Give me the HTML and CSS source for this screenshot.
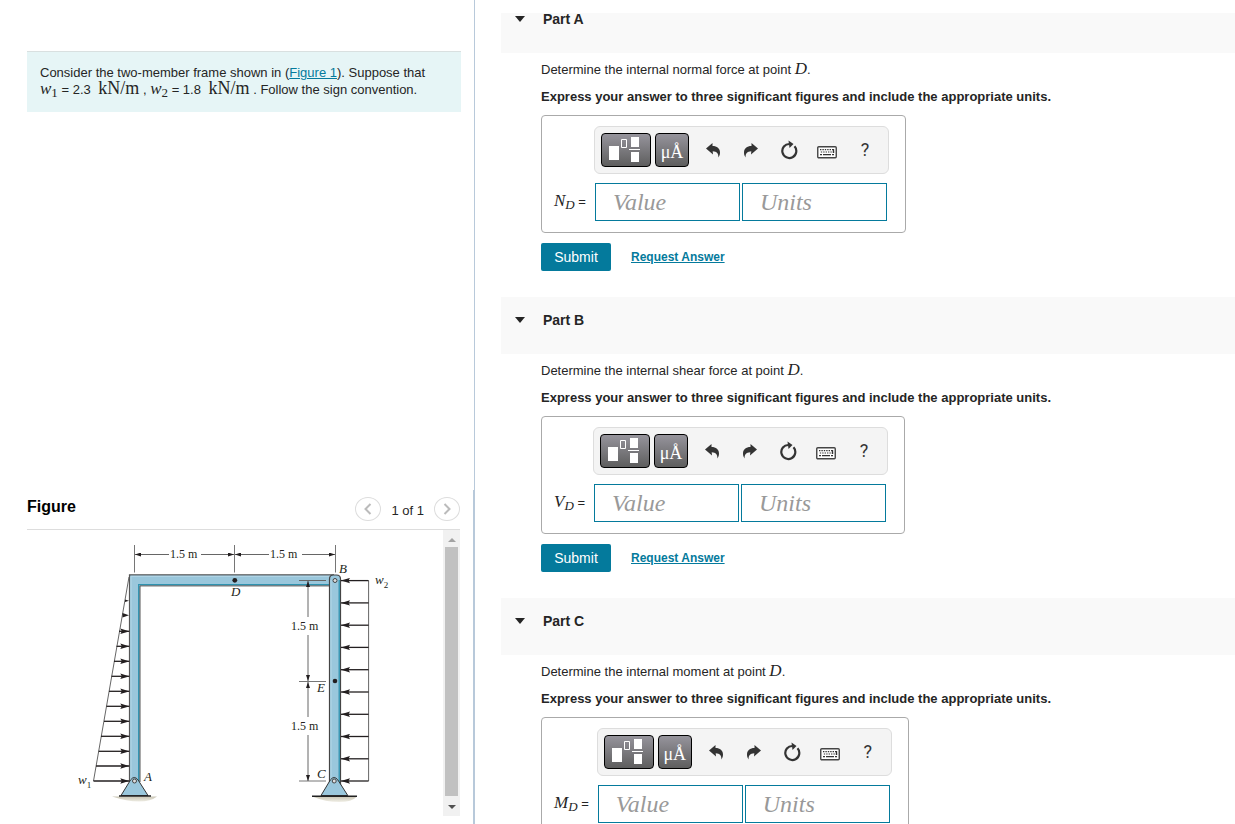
FILE: index.html
```
<!DOCTYPE html>
<html lang="en">
<head>
<meta charset="utf-8">
<title>Two-member frame</title>
<link rel="stylesheet" href="styles.css">
</head>
<body>
<svg class="defs" aria-hidden="true">
  <symbol id="i-template" viewBox="0 0 34 28">
    <path fill="#fff" d="M0 10h10v14H0zM22 1h8v10h-8zM22 16h8v10h-8zM20 13h11v1H20z"/>
    <path fill="none" stroke="#fff" d="M12.500 3.500h5v8h-5z"/>
  </symbol>
  <symbol id="i-undo" viewBox="0 0 16 16">
    <path fill="#333" d="M1 6.500 7.500 1v3C12 4 15 6.500 15 10.500c0 2-.6 3.500-1.600 5C13.500 11.500 12 9.500 7.700 9.300L8 12.500z"/>
  </symbol>
  <symbol id="i-redo" viewBox="0 0 16 16">
    <path fill="#333" d="M15 6.500 8.500 1v3C4 4 1 6.500 1 10.500c0 2 .6 3.500 1.600 5C2.500 11.500 4 9.500 8.300 9.300L8 12.500z"/>
  </symbol>
  <symbol id="i-reset" viewBox="0 0 18 20">
    <path fill="none" stroke="#333" stroke-width="2.200" d="M14.500 6.300A7 7 0 1 1 9.500 4"/>
    <path fill="#333" d="M8.500.5 13.500 4 9.500 8z"/>
  </symbol>
  <symbol id="i-keyboard" viewBox="0 0 20 13">
    <rect x=".75" y=".75" width="18.500" height="11" rx="1" fill="#fff" stroke="#444" stroke-width="1.400"/>
    <path stroke="#333" stroke-width="1.200" stroke-dasharray="1.400 1" d="M3 3.700h14M3.800 6h13.400"/>
    <path stroke="#333" stroke-width="1.300" d="M3 8.700h2m1 0h8m1 0h2M16.500 3v4"/>
  </symbol>
</svg>

<div class="page">
  <aside class="left">
    <section class="intro">
      Consider the two-member frame shown in (<a href="#figure">Figure 1</a>). Suppose that
      <span class="math"><i>w</i><sub>1</sub></span> = 2.3 <span class="math unit">kN/m</span> , <span class="math"><i>w</i><sub>2</sub></span> = 1.8 <span class="math unit">kN/m</span> . Follow the sign convention.
    </section>

    <section class="figure" id="figure">
      <header class="figure-head">
        <h2>Figure</h2>
        <nav class="pager" aria-label="Figures">
          <button type="button" aria-label="Previous"><svg width="8" height="12" viewBox="0 0 8 12"><path d="M6.500 1 1.500 6l5 5"/></svg></button>
          <span>1 of 1</span>
          <button type="button" aria-label="Next"><svg width="8" height="12" viewBox="0 0 8 12"><path d="m1.500 1 5 5-5 5"/></svg></button>
        </nav>
      </header>
      <div class="viewer">
        <svg class="diagram" width="416" height="286" viewBox="27 530 416 286" role="img" aria-label="Frame A B C with distributed loads">
          <defs>
            <marker id="load" viewBox="0 0 9 6" refX="9" refY="3" markerWidth="9" markerHeight="6" markerUnits="userSpaceOnUse" orient="auto"><path d="M0 .3 9 3 0 5.700 1.500 3z" fill="#231f20"/></marker>
            <marker id="dim" viewBox="0 0 6 4" refX="6" refY="2" markerWidth="6" markerHeight="4" markerUnits="userSpaceOnUse" orient="auto"><path d="M0 0 6 2 0 4z" fill="#231f20"/></marker>
            <linearGradient id="ground" x2="0" y2="1"><stop stop-color="#c9c5b4"/><stop offset="1" stop-color="#f2f0e8"/></linearGradient>
          </defs>
          <path d="M112 796.500h45q-6 5-18 5t-27-5zM312 796.500h45q-5 5.500-18 5.500t-27-5.500z" fill="url(#ground)"/>
          <path d="M129.500 782V574.800H334v11H140V782z" fill="#9ac7dc"/>
          <path d="M138.700 782V584.600H330" fill="none" stroke="#2e93b0" stroke-width="1.300"/>
          <path d="M129.500 782V574.800H334" fill="none" stroke="#555" stroke-width="1.200"/>
          <path d="M140 782V585.900H330" fill="none" stroke="#555"/>
          <path d="M131 782V576.300H330" fill="none" stroke="#b4d8e8"/>
          <path d="M329.500 785V579q0-4 4-4h3q4 0 4 4v206z" fill="#9ac7dc" stroke="#444" stroke-width="1.200"/>
          <path d="M339.200 785V580" stroke="#2e93b0" stroke-width="1.300"/>
          <path d="M331 785V580" stroke="#b4d8e8"/>
          <path d="M299 580.500h27" stroke="#666"/>
          <g fill="#9ac7dc" stroke="#333">
            <path d="M121 795.500 130.500 780q3.800-5 7.600 0l9.900 15.500z"/>
            <path d="M321 795.500 330.300 780q3.800-5 7.600 0l9.900 15.500z"/>
          </g>
          <path d="M119 796h32M312 796.300h45" stroke="#222" stroke-width="1.400"/>
          <g fill="#ddd" stroke="#444"><circle cx="134.500" cy="781" r="2"/><circle cx="334.200" cy="781" r="2"/><circle cx="335" cy="580.500" r="2"/></g>
          <g fill="#231f20"><circle cx="234.800" cy="580.300" r="2.400"/><circle cx="335" cy="681" r="2.300"/></g>
          <path d="M129 577 93.500 781M368.600 580.600V781" stroke="#555" stroke-width=".9"/>
          <g stroke="#231f20" stroke-width="1.300" marker-end="url(#load)">
            <path d="M119 631.300h10.300"/><path d="M116.500 646.300h12.800"/><path d="M114 661.300h15.300"/><path d="M111.500 676.300h17.800"/><path d="M109 691.300h20.300"/><path d="M106.500 706.300h22.800"/><path d="M104 721.300h25.300"/><path d="M101 736.300h28.300"/><path d="M98.700 751.300h30.600"/><path d="M96 766h33.300"/><path d="M93.500 781h35.800"/>
            <path d="M368.600 580.600H341"/><path d="M368.600 602.900H341"/><path d="M368.600 625.200H341"/><path d="M368.600 647.400H341"/><path d="M368.600 669.700H341"/><path d="M368.600 692H341"/><path d="M368.600 714.300H341"/><path d="M368.600 736.500H341"/><path d="M368.600 758.800H341"/><path d="M368.600 781H341"/>
          </g>
          <path d="m125 599.500 4 1.200-4 1.200zM122.500 613l6.500 2.300-6.500 2.300z" fill="#231f20"/>
          <path d="M134.500 545v27.500M234.500 545v27.500M335.500 545v27.500M299 681.500h27M299 781h27" stroke="#666" stroke-width=".9"/>
          <g stroke="#555" stroke-width=".9" marker-end="url(#dim)">
            <path d="M169 554.500h-34"/><path d="M201 554.500h33"/><path d="M269 554.500h-34"/><path d="M302 554.500h33"/>
            <path d="M308 617v-36"/><path d="M308 635v46"/><path d="M308 717v-35"/><path d="M308 735v46"/>
          </g>
          <g class="dim-text">
            <text x="170" y="558">1.5 m</text><text x="270" y="558">1.5 m</text><text x="291" y="630">1.5 m</text><text x="291" y="730">1.5 m</text>
          </g>
          <g class="point-text">
            <text x="231" y="596">D</text><text x="339" y="573">B</text><text x="317" y="692">E</text><text x="317" y="778">C</text><text x="144" y="781">A</text>
            <text x="78" y="784">w<tspan class="sub" dy="4">1</tspan></text><text x="375" y="584">w<tspan class="sub" dy="4">2</tspan></text>
          </g>
        </svg>
        <div class="scrollbar" aria-hidden="true"><span class="up"></span><span class="thumb"></span><span class="down"></span></div>
      </div>
    </section>
  </aside>

  <main class="right">
    <section class="part">
      <h2 class="part-head"><button type="button"><span class="caret"></span>Part A</button></h2>
      <div class="part-body">
        <p>Determine the internal normal force at point <i class="math">D</i>.</p>
        <p class="strong">Express your answer to three significant figures and include the appropriate units.</p>
        <div class="answer">
          <div class="toolbar">
            <button class="dark wide" type="button" aria-label="Templates"><svg width="34" height="28"><use href="#i-template"/></svg></button>
            <button class="dark" type="button">μÅ</button>
            <div class="tools">
              <button type="button" aria-label="Undo"><svg width="16" height="16"><use href="#i-undo"/></svg></button>
              <button type="button" aria-label="Redo"><svg width="16" height="16"><use href="#i-redo"/></svg></button>
              <button type="button" aria-label="Reset"><svg width="18" height="20"><use href="#i-reset"/></svg></button>
              <button class="keys" type="button" aria-label="Keyboard"><svg width="20" height="13"><use href="#i-keyboard"/></svg></button>
              <button class="help" type="button">?</button>
            </div>
          </div>
          <label for="va"><span class="math"><i>N</i><sub><i>D</i></sub></span> =</label>
          <div class="fields"><input id="va" type="text" placeholder="Value"><input type="text" placeholder="Units" aria-label="Units"></div>
        </div>
        <div class="actions"><button class="submit" type="button">Submit</button><a href="#a">Request Answer</a></div>
      </div>
    </section>

    <section class="part">
      <h2 class="part-head"><button type="button"><span class="caret"></span>Part B</button></h2>
      <div class="part-body">
        <p>Determine the internal shear force at point <i class="math">D</i>.</p>
        <p class="strong">Express your answer to three significant figures and include the appropriate units.</p>
        <div class="answer">
          <div class="toolbar">
            <button class="dark wide" type="button" aria-label="Templates"><svg width="34" height="28"><use href="#i-template"/></svg></button>
            <button class="dark" type="button">μÅ</button>
            <div class="tools">
              <button type="button" aria-label="Undo"><svg width="16" height="16"><use href="#i-undo"/></svg></button>
              <button type="button" aria-label="Redo"><svg width="16" height="16"><use href="#i-redo"/></svg></button>
              <button type="button" aria-label="Reset"><svg width="18" height="20"><use href="#i-reset"/></svg></button>
              <button class="keys" type="button" aria-label="Keyboard"><svg width="20" height="13"><use href="#i-keyboard"/></svg></button>
              <button class="help" type="button">?</button>
            </div>
          </div>
          <label for="vb"><span class="math"><i>V</i><sub><i>D</i></sub></span> =</label>
          <div class="fields"><input id="vb" type="text" placeholder="Value"><input type="text" placeholder="Units" aria-label="Units"></div>
        </div>
        <div class="actions"><button class="submit" type="button">Submit</button><a href="#b">Request Answer</a></div>
      </div>
    </section>

    <section class="part">
      <h2 class="part-head"><button type="button"><span class="caret"></span>Part C</button></h2>
      <div class="part-body">
        <p>Determine the internal moment at point <i class="math">D</i>.</p>
        <p class="strong">Express your answer to three significant figures and include the appropriate units.</p>
        <div class="answer">
          <div class="toolbar">
            <button class="dark wide" type="button" aria-label="Templates"><svg width="34" height="28"><use href="#i-template"/></svg></button>
            <button class="dark" type="button">μÅ</button>
            <div class="tools">
              <button type="button" aria-label="Undo"><svg width="16" height="16"><use href="#i-undo"/></svg></button>
              <button type="button" aria-label="Redo"><svg width="16" height="16"><use href="#i-redo"/></svg></button>
              <button type="button" aria-label="Reset"><svg width="18" height="20"><use href="#i-reset"/></svg></button>
              <button class="keys" type="button" aria-label="Keyboard"><svg width="20" height="13"><use href="#i-keyboard"/></svg></button>
              <button class="help" type="button">?</button>
            </div>
          </div>
          <label for="vc"><span class="math"><i>M</i><sub><i>D</i></sub></span> =</label>
          <div class="fields"><input id="vc" type="text" placeholder="Value"><input type="text" placeholder="Units" aria-label="Units"></div>
        </div>
      </div>
    </section>
  </main>
</div>
</body>
</html>
```

FILE: styles.css
```
* { box-sizing: border-box; }
body {
  margin: 0;
  background: #fff;
  color: #252525;
  font: 13px/18px "Liberation Sans", Arial, sans-serif;
}
.defs { display: none; }
button { margin: 0; padding: 0; border: 0; background: none; color: inherit; font: inherit; cursor: pointer; }
svg { display: block; }
a { color: #047a9c; }
.math { font-family: "Liberation Serif", "Times New Roman", serif; font-size: 17px; line-height: 0; }
.math sub { font-size: 13px; line-height: 0; vertical-align: -3px; }

.page { display: flex; height: 100vh; overflow: hidden; }

.left { flex: 0 0 475px; display: flex; flex-direction: column; justify-content: space-between; border-right: 1px solid #b8c9da; }
.intro {
  margin: 51px 13px 0 27px;
  padding: 12px 30px 14px 13px;
  border-top: 1px solid #d9e0e0;
  background: #e6f5f6;
  line-height: 17px;
}
.intro .unit { margin-left: 4px; font-size: 18px; }

.figure { padding: 0 13px 8px 27px; border-right: 1px solid #b8c9da; }
.figure-head { display: flex; justify-content: space-between; height: 40px; border-bottom: 1px solid #ddd; }
.figure-head h2 { margin: 0; padding-top: 7px; color: #000; font-size: 16px; line-height: 20px; }
.pager { display: flex; gap: 10px; padding-top: 7px; line-height: 27px; }
.pager button { display: grid; place-items: center; width: 26px; height: 24px; border: 1px solid #ddd; border-radius: 50%; }
.pager path { fill: none; stroke: #bbb; stroke-width: 2; }
.viewer { display: flex; justify-content: space-between; height: 286px; }
.diagram { font-family: "Liberation Serif", "Times New Roman", serif; fill: #231f20; }
.dim-text { font-size: 12px; }
.point-text { font-size: 13px; font-style: italic; }
.sub { font-size: 9px; font-style: normal; }
.scrollbar { display: flex; flex-direction: column; align-items: center; justify-content: space-between; width: 17px; padding: 8px 0 7px; background: #f1f1f1; }
.up, .down { border: 4px solid transparent; border-top: 0; border-bottom: 4px solid #a3a3a3; }
.down { border-bottom: 0; border-top: 4px solid #505050; }
.thumb { flex: 1; width: 13px; margin: 5px 0 9px; background: #c1c1c1; }

.right { flex: 1; min-width: 0; margin: 13px 0 0 26px; overflow: hidden; }
.part-head { margin: 0; height: 57px; padding: 15px 14px; background: #f9f9f9; font-size: 14px; line-height: 16px; }
.part:first-child .part-head { height: 40px; padding-top: 0; line-height: 12px; }
.part-head button { display: flex; align-items: center; gap: 18px; }
.caret { border: 5px solid transparent; border-top: 6px solid #252525; border-bottom: 0; }
.part-body { padding: 8px 0 26px 40px; }
.part p { margin: 0 0 9px; height: 18px; }
.part p.strong { font-weight: bold; }

.answer {
  display: inline-grid;
  grid-template-columns: auto auto;
  gap: 9px 8px;
  padding: 10px 16px 11px 12px;
  border: 1px solid #aaa;
  border-radius: 4px;
  vertical-align: top;
}
.toolbar { grid-column: 2; display: flex; gap: 4px; width: 295px; height: 48px; padding: 6px 3px 6px 6px; border: 1px solid #ddd; border-radius: 6px; background: #f4f4f4; }
.dark {
  display: grid;
  flex: none;
  place-items: center;
  width: 34px;
  height: 34px;
  border: 1px solid #000;
  border-radius: 4px;
  background: linear-gradient(#96949c, #5e5e5e);
  color: #fff;
  font: 18px/36px "Liberation Serif", "Times New Roman", serif;
}
.wide { width: 50px; }
.tools { display: flex; margin-left: 1px; }
.tools button { display: grid; flex: none; place-items: center; width: 38px; height: 34px; color: #333; }
.tools .keys { padding-top: 4px; }
.tools .help { font: 18px/34px Roboto, sans-serif; }
.answer label { align-self: center; white-space: nowrap; }
.fields { display: flex; gap: 2px; padding-left: 1px; }
.fields input {
  width: 145px;
  height: 38px;
  padding: 0 17px;
  border: 1px solid #047a9c;
  border-radius: 0;
  background: #fff;
  font: italic 24px/36px "Liberation Serif", "Times New Roman", serif;
}
.fields input::placeholder { color: #999; opacity: 1; }

.actions { display: flex; align-items: center; gap: 20px; margin-top: 10px; }
.submit { width: 70px; height: 28px; border-radius: 2px; background: #047a9c; color: #fff; font-size: 14px; }
.actions a { font-size: 12px; font-weight: bold; }
```
